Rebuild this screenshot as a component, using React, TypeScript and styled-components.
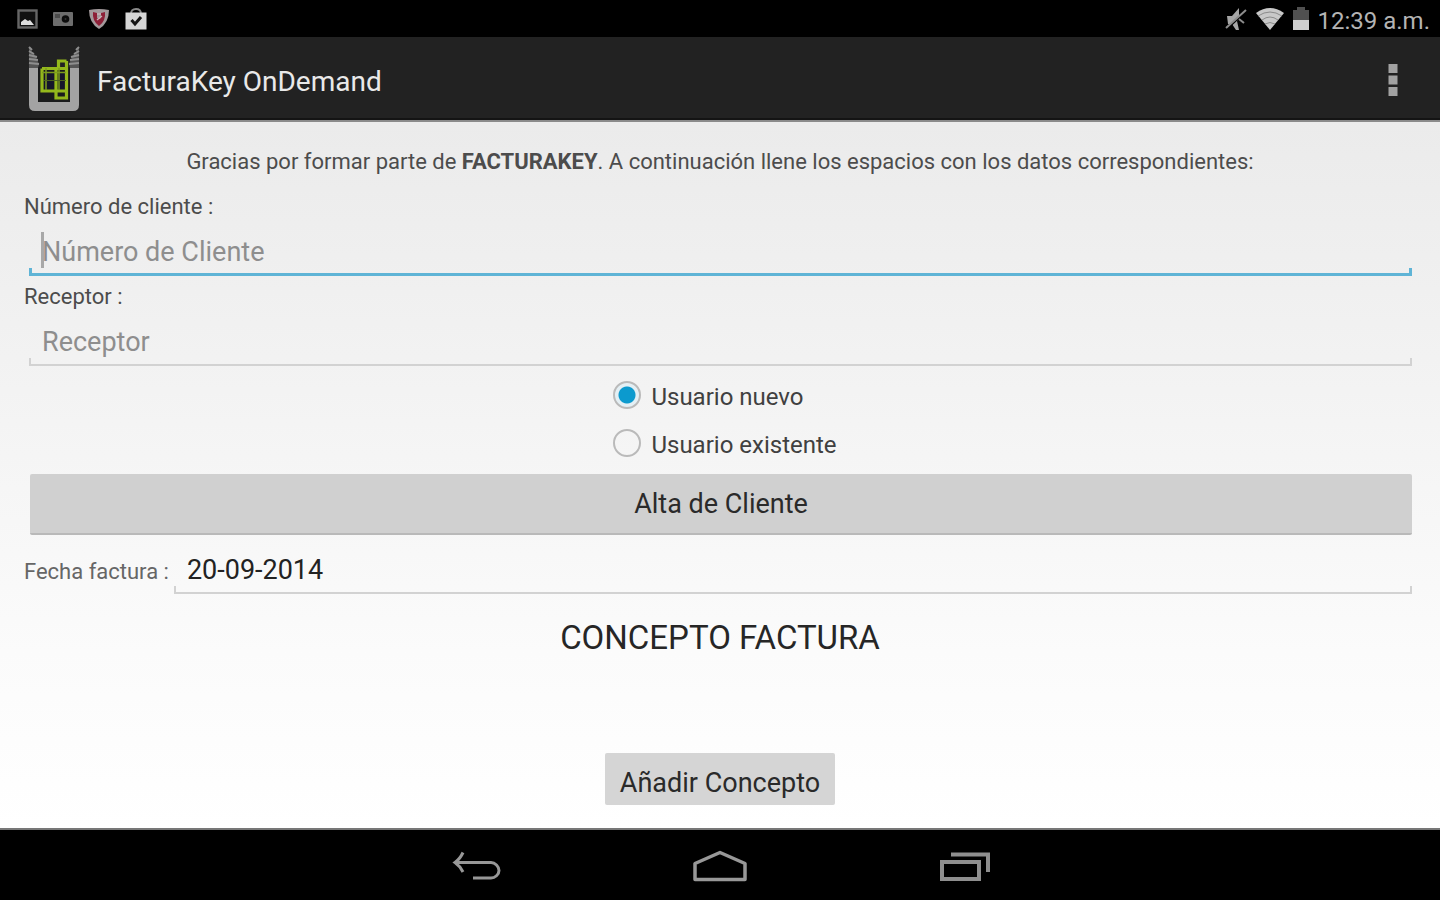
import React, { useState } from "react";
import styled, { createGlobalStyle } from "styled-components";

const GlobalStyle = createGlobalStyle`
  *, *::before, *::after { box-sizing: border-box; }
  body { margin: 0; background: #000; }
  body, button, input { font-family: Roboto, "Liberation Sans", sans-serif; }
`;

const Screen = styled.div`
  display: flex;
  flex-direction: column;
  min-height: 100vh;
`;

const StatusBar = styled.div`
  display: flex;
  align-items: center;
  justify-content: space-between;
  height: 37px;
  padding: 0 10px 0 16px;
  background: #000;
`;

const StatusGroup = styled.div<{ $gap: number }>`
  display: flex;
  align-items: center;
  gap: ${(p) => p.$gap}px;
`;

const Clock = styled.time`
  color: #b4b4b4;
  font-size: 24px;
  line-height: 32px;
  padding-top: 4px;
`;

const ActionBar = styled.header`
  display: flex;
  align-items: center;
  height: 85px;
  padding: 0 41px 0 28px;
  background: #222;
  border-bottom: 2px solid #8a8a8a;
  box-shadow: inset 0 -2px 0 #141414;
`;

const AppTitle = styled.h1`
  flex: 1;
  margin: 0 0 0 17px;
  padding-top: 6px;
  color: #e9e9e9;
  font-size: 28px;
  line-height: 36px;
  font-weight: 400;
`;

const IconButton = styled.button`
  display: flex;
  align-items: center;
  justify-content: center;
  padding: 0;
  border: 0;
  background: none;
  cursor: pointer;
`;

const Content = styled.main`
  flex: 1;
  display: flex;
  flex-direction: column;
  padding: 24px 28px 23px 24px;
  background: linear-gradient(#ebebeb, #f3f3f3 38%, #fbfbfb 75%, #fff);
`;

const Form = styled.form`
  flex: 1;
  display: flex;
  flex-direction: column;
`;

const Intro = styled.p`
  margin: 0 0 16px 4px;
  color: #4c4c4c;
  font-size: 22px;
  line-height: 32px;
  text-align: center;
`;

const Field = styled.div<{ $inline?: boolean }>`
  display: flex;
  flex-direction: ${(p) => (p.$inline ? "row" : "column")};
  align-items: ${(p) => (p.$inline ? "center" : "stretch")};
  margin-bottom: ${(p) => (p.$inline ? 0 : 8)}px;
`;

const Label = styled.label<{ $inline?: boolean }>`
  color: ${(p) => (p.$inline ? "#666" : "#4c4c4c")};
  font-size: 22px;
  line-height: 26px;
  white-space: nowrap;
  padding-top: ${(p) => (p.$inline ? 11 : 0)}px;
`;

const InputBox = styled.div`
  position: relative;
  flex: 1;
  display: flex;
  margin-left: 5px;
`;

const TextInput = styled.input<{ $active?: boolean }>`
  --line: ${(p) => (p.$active ? "#5fb4d6" : "#d2d2d2")};
  --thick: ${(p) => (p.$active ? 3 : 2)}px;
  width: 100%;
  height: 56px;
  padding: 8px 13px 0;
  border: 0;
  border-radius: 0;
  outline: 0;
  color: #222;
  font-size: 27px;
  background:
    linear-gradient(var(--line), var(--line)) left bottom / 100% var(--thick) no-repeat,
    linear-gradient(var(--line), var(--line)) left bottom / var(--thick) 8px no-repeat,
    linear-gradient(var(--line), var(--line)) right bottom / var(--thick) 8px no-repeat;

  &::placeholder {
    color: #8e8e8e;
    opacity: 1;
  }
`;

const Caret = styled.span`
  position: absolute;
  left: 12px;
  top: 12px;
  width: 3px;
  height: 36px;
  background: #a8a8a8;
`;

const RadioGroup = styled.div`
  align-self: center;
  display: flex;
  flex-direction: column;
  margin: -3px 0 7px;
  padding-left: 14px;
`;

const RadioLabel = styled.label`
  display: flex;
  align-items: center;
  gap: 10px;
  height: 48px;
  color: #404040;
  font-size: 24px;
  line-height: 32px;
`;

const RadioText = styled.span`
  padding-top: 3px;
`;

const Radio = styled.input`
  appearance: none;
  width: 28px;
  height: 28px;
  margin: 0;
  border: 2px solid #bababa;
  border-radius: 50%;

  &:checked {
    background: radial-gradient(circle, #0c9ace 8px, #e4eff4 9px);
  }
`;

const Button = styled.button<{ $compact?: boolean }>`
  align-self: ${(p) => (p.$compact ? "center" : "stretch")};
  height: ${(p) => (p.$compact ? 52 : 61)}px;
  margin: ${(p) => (p.$compact ? "auto 0 0 4px" : "0 0 3px 6px")};
  padding: ${(p) => (p.$compact ? "8px 15px 0" : "1px 15px 0")};
  border: 0;
  border-bottom: ${(p) => (p.$compact ? "0" : "2px solid #b9b9b9")};
  border-radius: 2px;
  background: ${(p) => (p.$compact ? "#d5d5d5" : "#d0d0d0")};
  color: #2a2a2a;
  font-size: 27px;
  line-height: 36px;
  cursor: pointer;
`;

const SectionTitle = styled.h2`
  margin: 24px 0 0 4px;
  color: #262626;
  font-size: 33px;
  line-height: 40px;
  font-weight: 400;
  text-align: center;
`;

const NavBar = styled.nav`
  display: flex;
  align-items: center;
  justify-content: center;
  gap: 144px;
  height: 72px;
  padding-top: 2px;
  background: #000;
  border-top: 2px solid #777;
`;

const NavButton = styled(IconButton)`
  width: 100px;
  height: 56px;
`;

const PictureIcon = () => (
  <svg width="22" height="20" viewBox="0 0 22 20" aria-hidden="true">
    <rect x="2.5" y="1.5" width="18" height="17" fill="#111" stroke="#666" strokeWidth="2.4" />
    <path d="M5 16v-3l4-3 3 2 2-1 4 5z" fill="#ddd" />
  </svg>
);

const DeviceIcon = () => (
  <svg width="22" height="16" viewBox="0 0 22 16" aria-hidden="true">
    <rect x="1" y="1" width="20" height="14" rx="1" fill="#6d6d6d" />
    <rect x="3" y="3" width="5" height="4" fill="#4b4b4b" />
    <circle cx="13.5" cy="8" r="3.8" fill="#0c0c0c" />
    <circle cx="13.5" cy="8" r="1" fill="#333" />
  </svg>
);

const ShieldIcon = () => (
  <svg width="22" height="22" viewBox="0 0 22 22" aria-hidden="true">
    <path d="M1 2q10-2 20 0 0 13-10 19Q1 15 1 2z" fill="#a39a9c" />
    <path d="M5 4l4 1v5l2 1 2-1V5l4-1q1 9-6 14Q4 13 5 4z" fill="#8e2038" />
    <path d="M9 6h4M9 12l5-4" stroke="#c8b3b8" strokeWidth="1.4" />
  </svg>
);

const StoreIcon = () => (
  <svg width="24" height="24" viewBox="0 0 24 24" aria-hidden="true">
    <path d="M7 7q0-5 5-5t5 5" fill="none" stroke="#888" strokeWidth="1.8" />
    <path d="M1.500 5.500h21v17h-21z" fill="#d6d6d6" />
    <path d="M7.500 13l3.500 4 6-7" fill="none" stroke="#151515" strokeWidth="3" />
  </svg>
);

const MutedIcon = () => (
  <svg width="22" height="26" viewBox="0 0 22 26" aria-hidden="true">
    <path d="M2 10h5l7-8v9l-2 4 2 9h-3l-4-6H3z" fill="#a6a6a6" />
    <path d="M5 20L21 5" stroke="#000" strokeWidth="2" />
    <path d="M1 22L21 4M14 13l5 4" stroke="#8c8c8c" strokeWidth="2" />
  </svg>
);

const WifiIcon = () => (
  <svg width="28" height="22" viewBox="0 0 28 22" aria-hidden="true">
    <path d="M0 5q14-10 28 0L14 22z" fill="#c8c8c8" />
    <path d="M2 8q12-8 24 0M6 12q8-6 16 0M9 16q5-3 10 0" fill="none" stroke="#8a8a8a" strokeWidth="1" />
  </svg>
);

const BatteryIcon = () => (
  <svg width="16" height="24" viewBox="0 0 16 24" aria-hidden="true">
    <path d="M4 0h8v3h4v10H0V3h4z" fill="#505050" />
    <path d="M0 13h16v10H0z" fill="#cfcfcf" />
  </svg>
);

const AppLogo = () => (
  <svg width="52" height="66" viewBox="0 0 52 66" aria-hidden="true">
    <path d="M1 21h9v35h32V21h9v38q0 6-6 6H7q-6 0-6-6z" fill="#a3a3a3" />
    <path d="M10 21h32v35H10z" fill="#1a1b1c" />
    <path d="M1 1l3 5 3 3 4 9-1 4H1zM51 1l-3 5-3 3-4 9 1 4h9z" fill="#555" />
    <path
      d="M1 1l3 3M1 5l5 3M1 9l8 2M1 13l9 1M1 17l10 1M51 1l-3 3M51 5l-5 3M51 9l-8 2M51 13l-9 1M51 17l-10 1"
      stroke="#8e8e8e"
      strokeWidth="2"
    />
    <path d="M16 27h10v16H16zM30 27h7v16h-7z" fill="#15152b" />
    <path
      d="M14 22.500h24.500M14 22.500v22.500h24.500M38.500 15v37H28V22M30.500 22v-7h8"
      fill="none"
      stroke="#94b81c"
      strokeWidth="3.200"
    />
    <path d="M14 26.500h24M31 22v22M18 22v22" stroke="#7c9c1e" strokeWidth="1.500" />
    <path d="M16 34.500h22" stroke="#4c6020" strokeWidth="1" />
  </svg>
);

const OverflowIcon = () => (
  <svg width="12" height="34" viewBox="0 0 12 34" aria-hidden="true">
    <path d="M1.500 2h9v9h-9zM1.500 13.500h9v9h-9zM1.500 25h9v9h-9z" fill="#a2a2a2" />
  </svg>
);

const BackIcon = () => (
  <svg width="50" height="30" viewBox="0 0 50 30" fill="none" stroke="#989898" strokeWidth="3" aria-hidden="true">
    <path d="M6 11.500h34c4 0 8 4 8 8s-4 7.500-8 7.500H22" />
    <path d="M12 1.500Q9 8 4 11.500 9 15 12 21" />
  </svg>
);

const HomeIcon = () => (
  <svg width="56" height="32" viewBox="0 0 56 32" fill="none" stroke="#989898" strokeWidth="3.500" aria-hidden="true">
    <path d="M3 29.500V13.500L28 2.500l25 11v16z" strokeLinejoin="round" />
  </svg>
);

const RecentIcon = () => (
  <svg width="52" height="32" viewBox="0 0 52 32" fill="none" stroke="#8e8e8e" strokeWidth="4" aria-hidden="true">
    <path d="M4 12h37v17H4z" />
    <path d="M13 4.500h37V22" />
  </svg>
);

export default function App() {
  const [userKind, setUserKind] = useState("nuevo");

  return (
    <>
      <GlobalStyle />
      <Screen>
        <StatusBar>
          <StatusGroup $gap={14}>
            <PictureIcon />
            <DeviceIcon />
            <ShieldIcon />
            <StoreIcon />
          </StatusGroup>
          <StatusGroup $gap={9}>
            <MutedIcon />
            <WifiIcon />
            <BatteryIcon />
            <Clock>12:39 a.m.</Clock>
          </StatusGroup>
        </StatusBar>

        <ActionBar>
          <AppLogo />
          <AppTitle>FacturaKey OnDemand</AppTitle>
          <IconButton type="button" aria-label="Más opciones">
            <OverflowIcon />
          </IconButton>
        </ActionBar>

        <Content>
          <Form onSubmit={(e) => e.preventDefault()}>
            <Intro>
              Gracias por formar parte de <b>FACTURAKEY</b>. A continuación llene los espacios con los datos
              correspondientes:
            </Intro>

            <Field>
              <Label htmlFor="cliente">Número de cliente :</Label>
              <InputBox>
                <TextInput id="cliente" placeholder="Número de Cliente" $active />
                <Caret />
              </InputBox>
            </Field>

            <Field>
              <Label htmlFor="receptor">Receptor :</Label>
              <InputBox>
                <TextInput id="receptor" placeholder="Receptor" />
              </InputBox>
            </Field>

            <RadioGroup role="radiogroup" aria-label="Tipo de usuario">
              <RadioLabel>
                <Radio
                  type="radio"
                  name="usuario"
                  checked={userKind === "nuevo"}
                  onChange={() => setUserKind("nuevo")}
                />
                <RadioText>Usuario nuevo</RadioText>
              </RadioLabel>
              <RadioLabel>
                <Radio
                  type="radio"
                  name="usuario"
                  checked={userKind === "existente"}
                  onChange={() => setUserKind("existente")}
                />
                <RadioText>Usuario existente</RadioText>
              </RadioLabel>
            </RadioGroup>

            <Button type="button">Alta de Cliente</Button>

            <Field $inline>
              <Label htmlFor="fecha" $inline>
                Fecha factura :
              </Label>
              <InputBox>
                <TextInput id="fecha" defaultValue="20-09-2014" />
              </InputBox>
            </Field>

            <SectionTitle>CONCEPTO FACTURA</SectionTitle>

            <Button type="button" $compact>
              Añadir Concepto
            </Button>
          </Form>
        </Content>

        <NavBar>
          <NavButton type="button" aria-label="Atrás">
            <BackIcon />
          </NavButton>
          <NavButton type="button" aria-label="Inicio">
            <HomeIcon />
          </NavButton>
          <NavButton type="button" aria-label="Recientes">
            <RecentIcon />
          </NavButton>
        </NavBar>
      </Screen>
    </>
  );
}
